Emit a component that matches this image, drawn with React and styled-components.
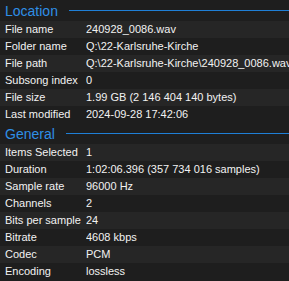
import React from 'react';
import styled, { createGlobalStyle } from 'styled-components';

const GlobalStyle = createGlobalStyle`
  html, body {
    margin: 0;
    padding: 0;
    background: #1e1e1e;
  }
`;

const Panel = styled.div`
  width: 289px;
  height: 281px;
  overflow: hidden;
  background: #1e1e1e;
  font-family: 'Liberation Sans', Arial, sans-serif;
  font-size: 11px;
  color: #f2f2f2;
`;

const SectionHeader = styled.div`
  display: flex;
  align-items: center;
  height: 21px;
  padding-left: 5px;
  gap: 11px;
`;

const SectionTitle = styled.span`
  font-size: 14px;
  color: #2f8fe6;
  white-space: nowrap;
`;

const SectionRule = styled.div`
  flex: 1;
  height: 1px;
  background: #1f7fd6;
`;

const Row = styled.div`
  display: grid;
  grid-template-columns: 81px 1fr;
  height: 17px;
  line-height: 17px;
  padding-left: 5px;
  white-space: nowrap;
  background: ${(props) => (props.alt ? '#262626' : '#1e1e1e')};
`;

const Label = styled.span`
  overflow: hidden;
`;

const Value = styled.span`
  overflow: hidden;
`;

const sections = [
  {
    title: 'Location',
    rows: [
      ['File name', '240928_0086.wav'],
      ['Folder name', 'Q:\\22-Karlsruhe-Kirche'],
      ['File path', 'Q:\\22-Karlsruhe-Kirche\\240928_0086.wav'],
      ['Subsong index', '0'],
      ['File size', '1.99 GB (2 146 404 140 bytes)'],
      ['Last modified', '2024-09-28 17:42:06'],
    ],
  },
  {
    title: 'General',
    rows: [
      ['Items Selected', '1'],
      ['Duration', '1:02:06.396 (357 734 016 samples)'],
      ['Sample rate', '96000 Hz'],
      ['Channels', '2'],
      ['Bits per sample', '24'],
      ['Bitrate', '4608 kbps'],
      ['Codec', 'PCM'],
      ['Encoding', 'lossless'],
    ],
  },
];

const App = () => (
  <Panel>
    <GlobalStyle />
    {sections.map((section) => (
      <section key={section.title}>
        <SectionHeader>
          <SectionTitle>{section.title}</SectionTitle>
          <SectionRule />
        </SectionHeader>
        {section.rows.map(([label, value], index) => (
          <Row key={label} alt={index % 2 === 0}>
            <Label>{label}</Label>
            <Value>{value}</Value>
          </Row>
        ))}
      </section>
    ))}
  </Panel>
);

export default App;
